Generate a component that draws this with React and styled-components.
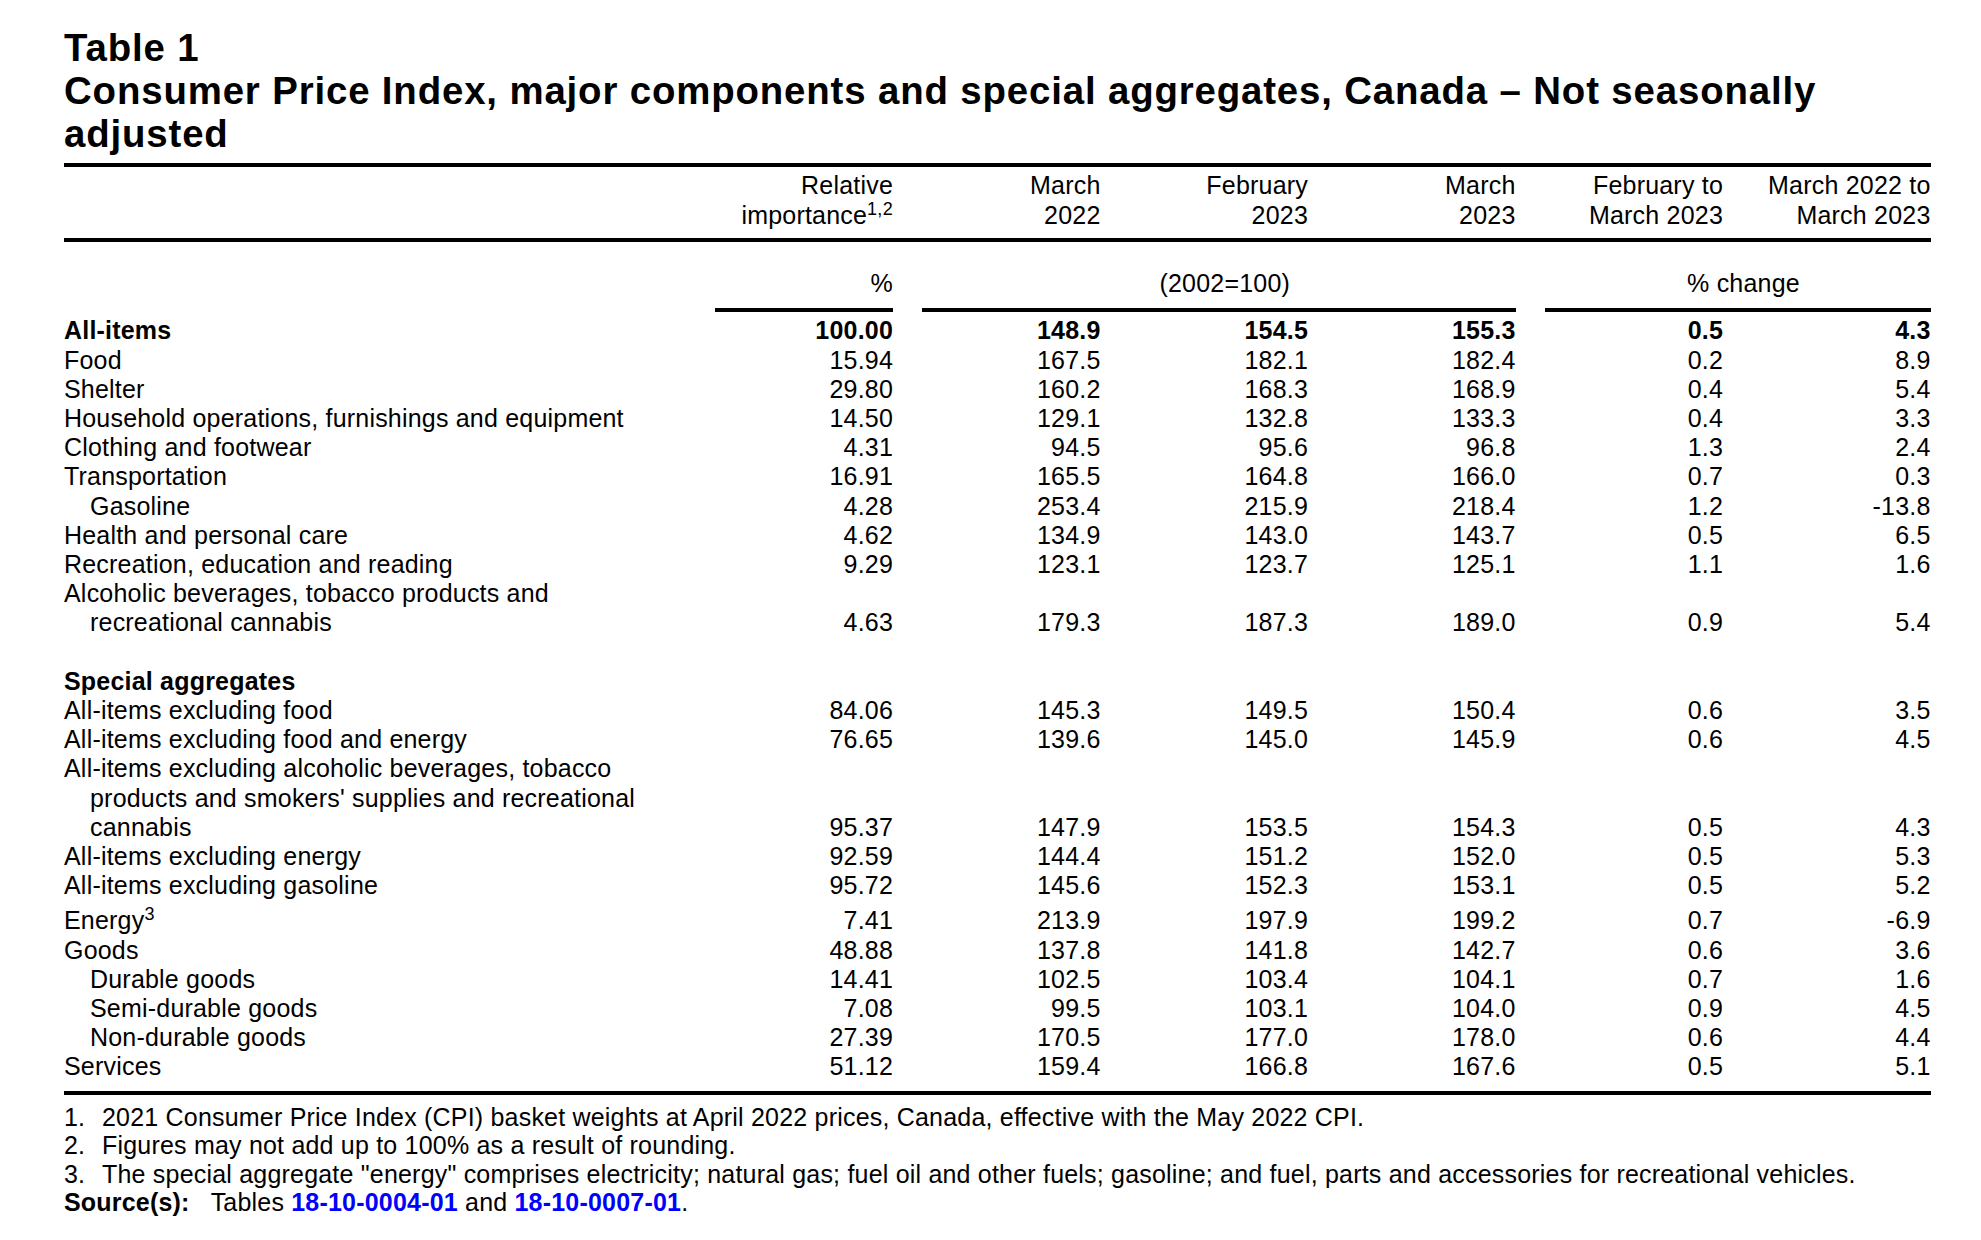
import React from "react";
import styled, { createGlobalStyle } from "styled-components";

const GlobalStyle = createGlobalStyle`
  html, body { margin: 0; padding: 0; background: #ffffff; }
  body {
    font-family: "Liberation Sans", Arial, Helvetica, sans-serif;
    color: #000000;
  }
`;

const COLS = "621.5px repeat(6, 207.5px)";

const Page = styled.div`
  padding: 26.3px 0 40px 64px;
  width: 1866.5px;
`;

const Title = styled.h1`
  margin: 0;
  font-size: 38.4px;
  line-height: 43px;
  letter-spacing: 0.85px;
  font-weight: 700;
`;

const Rule = styled.div`
  height: 4px;
  background: #000;
  margin-top: ${(p) => p.$top || 0}px;
`;

const HeaderRow = styled.div`
  display: grid;
  grid-template-columns: ${COLS};
  align-items: end;
  padding: 2.8px 0 8.4px;
  font-size: 25px;
  line-height: 30px;
  letter-spacing: 0.2px;
`;

const HeadCell = styled.div`
  text-align: right;
`;

const Sup = styled.sup`
  font-size: 18px;
  line-height: 0;
  vertical-align: 9px;
  letter-spacing: 0.3px;
`;

const UnitsRow = styled.div`
  display: grid;
  grid-template-columns: ${COLS};
  margin-top: 26.6px;
  font-size: 25px;
  line-height: 29.2px;
  letter-spacing: 0.2px;
`;

const UnitCell = styled.div`
  grid-column: ${(p) => p.$span};
  margin-left: 29px;
  padding-bottom: 10.4px;
  padding-left: ${(p) => (p.$align === "right" ? 0 : 12)}px;
  border-bottom: 4px solid #000;
  text-align: ${(p) => p.$align || "center"};
`;

const Body = styled.div`
  margin-top: 4px;
`;

const Row = styled.div`
  display: grid;
  grid-template-columns: ${COLS};
  align-items: end;
  font-size: 25px;
  line-height: 29.2px;
  letter-spacing: 0.2px;
  min-height: 29.2px;
  padding-top: ${(p) => (p.$tall ? 6 : 0)}px;
  font-weight: ${(p) => (p.$bold ? 700 : 400)};
`;

const Label = styled.div`
  text-align: left;
`;

const LabelLine = styled.div`
  padding-left: ${(p) => (p.$indent ? 26 : 0)}px;
  white-space: nowrap;
`;

const Num = styled.div`
  text-align: right;
  white-space: nowrap;
`;

const Notes = styled.div`
  margin-top: 7.8px;
  font-size: 25px;
  line-height: 28.4px;
  letter-spacing: 0.2px;
`;

const Note = styled.div`
  display: flex;
`;

const NoteNum = styled.span`
  width: 38px;
  flex: none;
`;

const Source = styled.div`
  display: flex;
  align-items: baseline;
`;

const SourceLabel = styled.span`
  font-weight: 700;
  margin-right: 21px;
`;

const Link = styled.a`
  color: #0000ff;
  font-weight: 700;
  text-decoration: none;
`;

const rows = [
  { label: ["All-items"], bold: true, v: ["100.00", "148.9", "154.5", "155.3", "0.5", "4.3"] },
  { label: ["Food"], v: ["15.94", "167.5", "182.1", "182.4", "0.2", "8.9"] },
  { label: ["Shelter"], v: ["29.80", "160.2", "168.3", "168.9", "0.4", "5.4"] },
  { label: ["Household operations, furnishings and equipment"], v: ["14.50", "129.1", "132.8", "133.3", "0.4", "3.3"] },
  { label: ["Clothing and footwear"], v: ["4.31", "94.5", "95.6", "96.8", "1.3", "2.4"] },
  { label: ["Transportation"], v: ["16.91", "165.5", "164.8", "166.0", "0.7", "0.3"] },
  { label: ["Gasoline"], indent: true, v: ["4.28", "253.4", "215.9", "218.4", "1.2", "-13.8"] },
  { label: ["Health and personal care"], v: ["4.62", "134.9", "143.0", "143.7", "0.5", "6.5"] },
  { label: ["Recreation, education and reading"], v: ["9.29", "123.1", "123.7", "125.1", "1.1", "1.6"] },
  { label: ["Alcoholic beverages, tobacco products and", "recreational cannabis"], v: ["4.63", "179.3", "187.3", "189.0", "0.9", "5.4"] },
  { label: [""], v: [] },
  { label: ["Special aggregates"], bold: true, v: [] },
  { label: ["All-items excluding food"], v: ["84.06", "145.3", "149.5", "150.4", "0.6", "3.5"] },
  { label: ["All-items excluding food and energy"], v: ["76.65", "139.6", "145.0", "145.9", "0.6", "4.5"] },
  {
    label: [
      "All-items excluding alcoholic beverages, tobacco",
      "products and smokers' supplies and recreational",
      "cannabis",
    ],
    v: ["95.37", "147.9", "153.5", "154.3", "0.5", "4.3"],
  },
  { label: ["All-items excluding energy"], v: ["92.59", "144.4", "151.2", "152.0", "0.5", "5.3"] },
  { label: ["All-items excluding gasoline"], v: ["95.72", "145.6", "152.3", "153.1", "0.5", "5.2"] },
  { label: ["Energy"], sup: "3", tall: true, v: ["7.41", "213.9", "197.9", "199.2", "0.7", "-6.9"] },
  { label: ["Goods"], v: ["48.88", "137.8", "141.8", "142.7", "0.6", "3.6"] },
  { label: ["Durable goods"], indent: true, v: ["14.41", "102.5", "103.4", "104.1", "0.7", "1.6"] },
  { label: ["Semi-durable goods"], indent: true, v: ["7.08", "99.5", "103.1", "104.0", "0.9", "4.5"] },
  { label: ["Non-durable goods"], indent: true, v: ["27.39", "170.5", "177.0", "178.0", "0.6", "4.4"] },
  { label: ["Services"], v: ["51.12", "159.4", "166.8", "167.6", "0.5", "5.1"] },
];

const headers = [
  [["Relative"], ["importance", "1,2"]],
  [["March"], ["2022"]],
  [["February"], ["2023"]],
  [["March"], ["2023"]],
  [["February to"], ["March 2023"]],
  [["March 2022 to"], ["March 2023"]],
];

export default function App() {
  return (
    <Page>
      <GlobalStyle />
      <Title>
        Table 1
        <br />
        Consumer Price Index, major components and special aggregates, Canada – Not seasonally
        <br />
        adjusted
      </Title>
      <Rule $top={7.7} />
      <HeaderRow>
        <div />
        {headers.map((h, i) => (
          <HeadCell key={i}>
            <div>{h[0][0]}</div>
            <div>
              {h[1][0]}
              {h[1][1] && <Sup>{h[1][1]}</Sup>}
            </div>
          </HeadCell>
        ))}
      </HeaderRow>
      <Rule />
      <UnitsRow>
        <UnitCell $span="2 / 3" $align="right">%</UnitCell>
        <UnitCell $span="3 / 6">(2002=100)</UnitCell>
        <UnitCell $span="6 / 8">% change</UnitCell>
      </UnitsRow>
      <Body>
        {rows.map((r, i) => (
          <Row key={i} $bold={r.bold} $tall={r.tall}>
            <Label>
              {r.label.map((l, j) => (
                <LabelLine key={j} $indent={r.indent || j > 0}>
                  {l || "\u00a0"}
                  {r.sup && j === r.label.length - 1 && <Sup>{r.sup}</Sup>}
                </LabelLine>
              ))}
            </Label>
            {r.v.map((v, k) => (
              <Num key={k}>{v}</Num>
            ))}
          </Row>
        ))}
      </Body>
      <Rule $top={9.6} />
      <Notes>
        <Note>
          <NoteNum>1.</NoteNum>
          <span>2021 Consumer Price Index (CPI) basket weights at April 2022 prices, Canada, effective with the May 2022 CPI.</span>
        </Note>
        <Note>
          <NoteNum>2.</NoteNum>
          <span>Figures may not add up to 100% as a result of rounding.</span>
        </Note>
        <Note>
          <NoteNum>3.</NoteNum>
          <span>
            The special aggregate "energy" comprises electricity; natural gas; fuel oil and other fuels; gasoline; and fuel, parts and accessories for recreational vehicles.
          </span>
        </Note>
        <Source>
          <SourceLabel>Source(s):</SourceLabel>
          <span>
            Tables <Link href="#">18-10-0004-01</Link> and <Link href="#">18-10-0007-01</Link>.
          </span>
        </Source>
      </Notes>
    </Page>
  );
}
